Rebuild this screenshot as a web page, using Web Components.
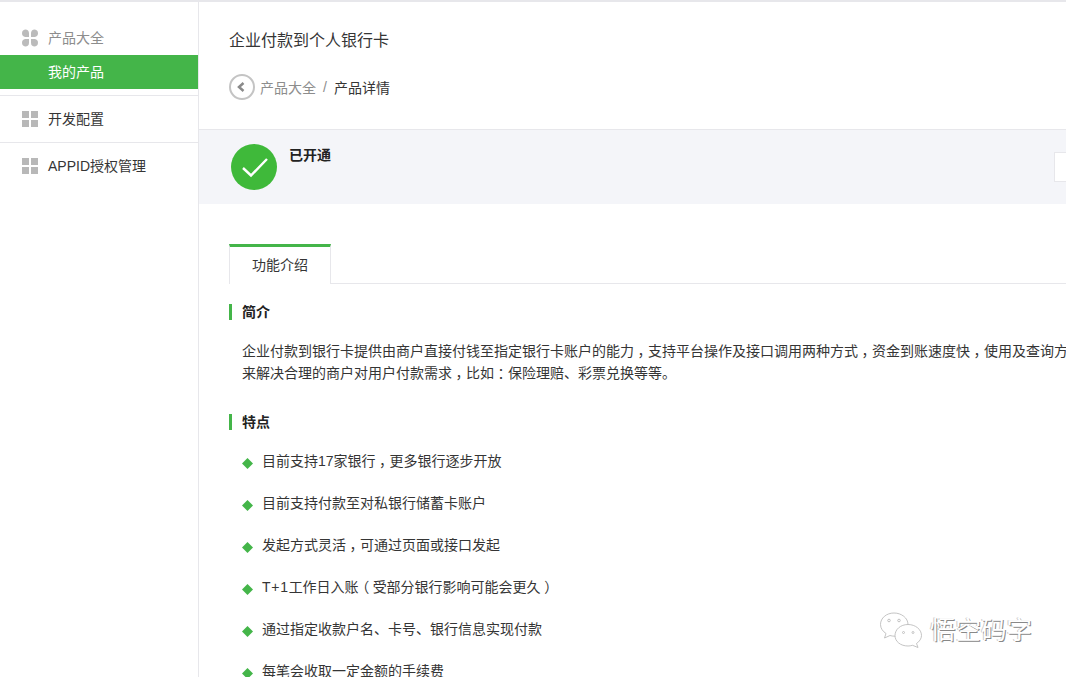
<!DOCTYPE html>
<html lang="zh">
<head>
<meta charset="utf-8">
<title>企业付款到个人银行卡</title>
<style>
    html, body {
        margin: 0;
        height: 100%;
        overflow: hidden;
        background: #fff;
    }
    body {
        font-family: "Liberation Sans", "Noto Sans CJK SC", sans-serif;
        font-size: 14px;
        color: #353535;
    }
</style>
</head>
<body>
<app-shell>
    <side-bar slot="side">
        <side-group>
            <side-item icon="clover" tone="muted">产品大全</side-item>
            <side-item active>我的产品</side-item>
        </side-group>
        <side-group>
            <side-item icon="grid">开发配置</side-item>
        </side-group>
        <side-group>
            <side-item icon="grid">APPID授权管理</side-item>
        </side-group>
    </side-bar>
    <page-head heading="企业付款到个人银行卡" parent="产品大全" current="产品详情"></page-head>
    <status-band label="已开通"></status-band>
    <tab-bar label="功能介绍"></tab-bar>
    <section-head style="margin-top:20px">简介</section-head>
    <intro-text>企业付款到银行卡提供由商户直接付钱至指定银行卡账户的能力<c-mark>，</c-mark>支持平台操作及接口调用两种方式<c-mark>，</c-mark>资金到账速度快<c-mark>，</c-mark>使用及查询方便<c-mark>，</c-mark>可以用<br>来解决合理的商户对用户付款需求<c-mark>，</c-mark>比如<c-mark>：</c-mark>保险理赔、彩票兑换等等。</intro-text>
    <section-head style="margin-top:30px">特点</section-head>
    <feature-list>
        <feature-item>目前支持17家银行<c-mark>，</c-mark>更多银行逐步开放</feature-item>
        <feature-item>目前支持付款至对私银行储蓄卡账户</feature-item>
        <feature-item>发起方式灵活<c-mark>，</c-mark>可通过页面或接口发起</feature-item>
        <feature-item><span style="letter-spacing:.7px">T+1</span>工作日入账<c-mark>（</c-mark>受部分银行影响可能会更久<c-mark>）</c-mark></feature-item>
        <feature-item>通过指定收款户名、卡号、银行信息实现付款</feature-item>
        <feature-item>每笔会收取一定金额的手续费</feature-item>
    </feature-list>
</app-shell>
<water-mark>悟空码字</water-mark>

<script>
// Page frame: sidebar on the left, content on the right
class AppShell extends HTMLElement {
    constructor() {
        super();
        this.attachShadow({ mode: 'open' });
        this.shadowRoot.innerHTML = `
            <style>
                :host {
                    display: flex;
                    height: 100vh;
                    box-sizing: border-box;
                    border-top: 2px solid #e7e7eb;
                    overflow: hidden;
                }
                .main {
                    flex: 1;
                    min-width: 0;
                    overflow: hidden;
                }
            </style>
            <slot name="side"></slot>
            <div class="main"><slot></slot></div>
        `;
    }
}

class SideBar extends HTMLElement {
    constructor() {
        super();
        this.attachShadow({ mode: 'open' });
        this.shadowRoot.innerHTML = `
            <style>
                :host {
                    display: block;
                    flex: none;
                    width: 198px;
                    padding-top: 13px;
                    border-right: 1px solid #e7e7eb;
                }
            </style>
            <slot></slot>
        `;
    }
}

class SideGroup extends HTMLElement {
    constructor() {
        super();
        this.attachShadow({ mode: 'open' });
        this.shadowRoot.innerHTML = `
            <style>
                :host {
                    display: block;
                    padding: 6px 0;
                    border-bottom: 1px solid #e7e7eb;
                }
                :host(:last-child) {
                    border-bottom: 0;
                }
            </style>
            <slot></slot>
        `;
    }
}

class SideItem extends HTMLElement {
    constructor() {
        super();
        this.attachShadow({ mode: 'open' });
        const icons = {
            clover: `<svg width="18" height="18" viewBox="0 0 18 18" fill="#bbb">
                <path d="M4.200 0.500A3.800 3.800 0 0 1 8 4.300V8H4.200A3.800 3.800 0 0 1 4.200 0.500Z"/>
                <path d="M13.800 0.500A3.800 3.800 0 0 0 10 4.300V8H13.800A3.800 3.800 0 0 0 13.800 0.500Z"/>
                <path d="M4.200 17.500A3.800 3.800 0 0 0 8 13.700V10H4.200A3.800 3.800 0 0 0 4.200 17.500Z"/>
                <path d="M13.800 17.500A3.800 3.800 0 0 1 10 13.700V10H13.800A3.800 3.800 0 0 1 13.800 17.500Z"/>
            </svg>`,
            grid: `<svg width="16" height="16" viewBox="0 0 16 16" fill="#b8b8b8">
                <rect width="7" height="7"/><rect x="9" width="7" height="7"/>
                <rect y="9" width="7" height="7"/><rect x="9" y="9" width="7" height="7"/>
            </svg>`
        };
        const name = this.getAttribute('icon');
        this.shadowRoot.innerHTML = `
            <style>
                :host {
                    display: flex;
                    align-items: center;
                    box-sizing: border-box;
                    height: 34px;
                    padding: 0 0 2px 48px;
                    position: relative;
                    color: #353535;
                }
                :host([tone="muted"]) { color: #8d8d8d; }
                :host([active]) {
                    background: #44b549;
                    color: #fff;
                }
                .icon {
                    position: absolute;
                    left: 21px;
                    top: 50%;
                    transform: translateY(-50%);
                    display: flex;
                }
                :host([icon="grid"]) .icon { left: 22px; }
            </style>
            <span class="icon">${icons[name] || ''}</span>
            <span><slot></slot></span>
        `;
    }
}

class PageHead extends HTMLElement {
    constructor() {
        super();
        this.attachShadow({ mode: 'open' });
        this.shadowRoot.innerHTML = `
            <style>
                :host {
                    display: block;
                    padding: 27px 30px 0;
                    height: 100px;
                }
                h2 {
                    margin: 0;
                    font-size: 16px;
                    font-weight: 400;
                    line-height: 24px;
                    color: #353535;
                }
                .crumb {
                    display: flex;
                    align-items: center;
                    margin-top: 21px;
                    height: 26px;
                }
                svg { flex: none; margin-right: 5px; }
                .parent { color: #8d8d8d; }
                .sep { margin: 0 7px; color: #8d8d8d; }
            </style>
            <h2>${this.getAttribute('heading')}</h2>
            <div class="crumb">
                <svg width="26" height="26" viewBox="0 0 26 26" fill="none">
                    <circle cx="13" cy="13" r="12" stroke="#c4c4c4" stroke-width="2"/>
                    <path d="M14.500 9L10 13L14.500 17" stroke="#8a8a8a" stroke-width="2.500"/>
                </svg>
                <span class="parent">${this.getAttribute('parent')}</span>
                <span class="sep">/</span>
                <span>${this.getAttribute('current')}</span>
            </div>
        `;
    }
}

class StatusBand extends HTMLElement {
    constructor() {
        super();
        this.attachShadow({ mode: 'open' });
        this.shadowRoot.innerHTML = `
            <style>
                :host {
                    display: flex;
                    align-items: flex-start;
                    height: 74px;
                    padding-left: 32px;
                    background: #f4f5f9;
                    border-top: 1px solid #e7e7eb;
                    overflow: hidden;
                }
                svg { flex: none; margin-top: 14px; }
                b {
                    margin: 15px 0 0 12px;
                    line-height: 20px;
                    color: #222;
                }
                .action {
                    margin-left: auto;
                    flex: none;
                    width: 11px;
                    height: 28px;
                    margin-top: 22px;
                    background: #fff;
                    border: 1px solid #e7e7eb;
                    border-right: 0;
                }
            </style>
            <svg width="46" height="46" viewBox="0 0 46 46">
                <circle cx="23" cy="23" r="23" fill="#3fb93a"/>
                <path d="M12 24L20 31.500L36 15" fill="none" stroke="#fff" stroke-width="2.400"/>
            </svg>
            <b>${this.getAttribute('label')}</b>
            <div class="action"></div>
        `;
    }
}

class TabBar extends HTMLElement {
    constructor() {
        super();
        this.attachShadow({ mode: 'open' });
        this.shadowRoot.innerHTML = `
            <style>
                :host {
                    display: block;
                    margin: 40px 0 0 30px;
                    height: 39px;
                    border-bottom: 1px solid #e7e7eb;
                }
                .tab {
                    width: 100px;
                    height: 37px;
                    line-height: 36px;
                    text-align: center;
                    background: #fff;
                    border-top: 3px solid #44b549;
                    border-left: 1px solid #e7e7eb;
                    border-right: 1px solid #e7e7eb;
                }
            </style>
            <div class="tab">${this.getAttribute('label')}</div>
        `;
    }
}

class SectionHead extends HTMLElement {
    constructor() {
        super();
        this.attachShadow({ mode: 'open' });
        this.shadowRoot.innerHTML = `
            <style>
                :host {
                    display: block;
                    margin-left: 30px;
                    padding-left: 10px;
                    height: 16px;
                    line-height: 16px;
                    border-left: 3px solid #44b549;
                    font-weight: 700;
                    color: #222;
                }
            </style>
            <slot></slot>
        `;
    }
}

class IntroText extends HTMLElement {
    constructor() {
        super();
        this.attachShadow({ mode: 'open' });
        this.shadowRoot.innerHTML = `
            <style>
                :host {
                    display: block;
                    margin: 20px 0 0 43px;
                    line-height: 22px;
                    white-space: nowrap;
                }
            </style>
            <slot></slot>
        `;
    }
}

class FeatureList extends HTMLElement {
    constructor() {
        super();
        this.attachShadow({ mode: 'open' });
        this.shadowRoot.innerHTML = `
            <style>
                :host {
                    display: flex;
                    flex-direction: column;
                    gap: 22px;
                    margin: 21px 0 0 43px;
                }
            </style>
            <slot></slot>
        `;
    }
}

class FeatureItem extends HTMLElement {
    constructor() {
        super();
        this.attachShadow({ mode: 'open' });
        this.shadowRoot.innerHTML = `
            <style>
                :host {
                    display: flex;
                    align-items: center;
                    height: 20px;
                    line-height: 20px;
                    white-space: nowrap;
                }
                svg { flex: none; margin: 4px 9px 0 0; }
            </style>
            <svg width="11" height="11" viewBox="0 0 11 11"><path d="M5.500 0L11 5.500L5.500 11L0 5.500Z" fill="#44b549"/></svg>
            <span><slot></slot></span>
        `;
    }
}

// Full-width punctuation sitting in the middle of its cell, as in the original font.
// No whitespace in this template: the host is inline, so it would show as spaces.
class CMark extends HTMLElement {
    constructor() {
        super();
        this.attachShadow({ mode: 'open' });
        this.shadowRoot.innerHTML = `<style>
            :host {
                font-family: "Liberation Sans", "Noto Sans CJK TC", sans-serif;
                font-feature-settings: "halt";
                padding: 0 3.5px;
            }
        </style><slot></slot>`;
    }
}

// Faint account stamp that sits over the page corner
class WaterMark extends HTMLElement {
    constructor() {
        super();
        this.attachShadow({ mode: 'open' });
        this.shadowRoot.innerHTML = `
            <style>
                :host {
                    position: absolute;
                    left: 880px;
                    top: 611px;
                    display: flex;
                    align-items: center;
                    gap: 8px;
                    font-size: 25.5px;
                    line-height: 36px;
                    white-space: nowrap;
                    color: #fff;
                    text-shadow: 1px 1px 0 #888, -1px 0 0 #ccc;
                }
                svg { flex: none; }
                span { display: block; margin-top: 1px; }
            </style>
            <svg width="42" height="36" viewBox="0 0 42 36" fill="#fff" stroke="#b5b5b5" stroke-width="0.800">
                <path d="M14 1C6.500 1 .5 6 .5 12.500C.5 16.500 3 19.500 6 21.500L4.500 26L10 23.500C11.500 24 13 24.200 15 24.200C22 24.200 28 19 28 12.500C28 6 21.500 1 14 1Z"/>
                <path d="M28 12.500C20.500 12.500 15 17.500 15 23.500C15 29.500 20.500 34 28 34C29.500 34 31 33.800 32.500 33.300L38 35.500L36.500 31.500C39.500 29.500 41.500 26.500 41.500 23.500C41.500 17.500 35.500 12.500 28 12.500Z"/>
                <circle cx="9" cy="8.500" r="1.300"/><circle cx="19" cy="8.500" r="1.300"/>
                <circle cx="23.500" cy="20.500" r="1"/><circle cx="33" cy="20.500" r="1"/>
            </svg>
            <span><slot></slot></span>
        `;
    }
}

customElements.define('app-shell', AppShell);
customElements.define('side-bar', SideBar);
customElements.define('side-group', SideGroup);
customElements.define('side-item', SideItem);
customElements.define('page-head', PageHead);
customElements.define('status-band', StatusBand);
customElements.define('tab-bar', TabBar);
customElements.define('section-head', SectionHead);
customElements.define('intro-text', IntroText);
customElements.define('feature-list', FeatureList);
customElements.define('feature-item', FeatureItem);
customElements.define('c-mark', CMark);
customElements.define('water-mark', WaterMark);
</script>
</body>
</html>
